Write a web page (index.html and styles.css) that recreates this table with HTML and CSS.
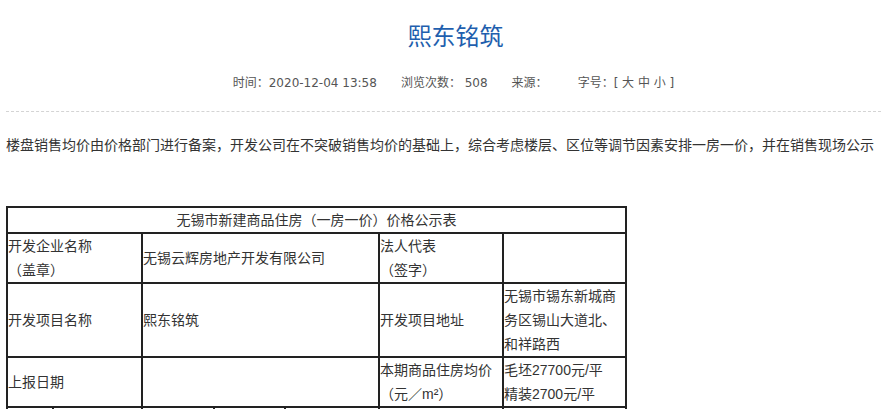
FILE: index.html
```html
<!DOCTYPE html>
<html lang="zh-CN">
<head>
<meta charset="utf-8">
<title>熙东铭筑</title>
<link rel="stylesheet" href="styles.css">
</head>
<body>
<div class="page">
  <h1 class="title">熙东铭筑</h1>
  <div class="meta">
    <span class="item">时间：2020-12-04 13:58</span>
    <span class="item">浏览次数： 508</span>
    <span class="item src">来源：</span>
    <span class="item">字号：[ 大 中 小 ]</span>
  </div>
  <p class="intro">楼盘销售均价由价格部门进行备案，开发公司在不突破销售均价的基础上，综合考虑楼层、区位等调节因素安排一房一价，并在销售现场公示</p>
  <table class="price">
    <colgroup>
      <col class="w1"><col class="w2"><col class="w3"><col class="w4"><col class="w5"><col class="w6"><col class="w7">
    </colgroup>
    <tr><td colspan="7" class="center">无锡市新建商品住房（一房一价）价格公示表</td></tr>
    <tr>
      <td colspan="2">开发企业名称<br>（盖章）</td>
      <td colspan="3">无锡云辉房地产开发有限公司</td>
      <td>法人代表<br>（签字）</td>
      <td></td>
    </tr>
    <tr>
      <td colspan="2">开发项目名称</td>
      <td colspan="3">熙东铭筑</td>
      <td>开发项目地址</td>
      <td>无锡市锡东新城商务区锡山大道北、和祥路西</td>
    </tr>
    <tr>
      <td colspan="2">上报日期</td>
      <td colspan="3"></td>
      <td>本期商品住房均价<br>（元／m²）</td>
      <td>毛坯27700元/平<br>精装2700元/平</td>
    </tr>
    <tr>
      <td>&nbsp;</td><td></td><td></td><td></td><td></td><td></td><td></td>
    </tr>
  </table>
</div>
</body>
</html>
```

FILE: styles.css
```css
html, body {
  margin: 0;
  padding: 0;
  background: #fff;
}
body {
  font-family: "Liberation Sans", "Noto Sans CJK SC", sans-serif;
  color: #333;
}
.page {
  width: 875px;
  padding: 0 2px 0 6px;
}
.title {
  margin: 20px 0 0;
  padding-left: 24px;
  text-align: center;
  font-size: 24px;
  line-height: 34px;
  font-weight: normal;
  color: #1f5fae;
}
.meta {
  margin-top: 19px;
  padding: 0 0 18px 20px;
  display: flex;
  justify-content: center;
  font-family: "DejaVu Sans", "Noto Sans CJK SC", sans-serif;
  font-size: 12px;
  line-height: 20px;
  color: #555;
  border-bottom: 1px dashed #d4d4d4;
}
.item {
  margin-right: 24px;
}
.item:last-child {
  margin-right: 0;
}
.src {
  margin-right: 30px;
}
.intro {
  margin: 21px 0 0;
  font-size: 14px;
  line-height: 24px;
}
.price {
  margin-top: 49px;
  width: 621px;
  table-layout: fixed;
  border-collapse: separate;
  border-spacing: 0;
  border: 1px solid #222;
  font-size: 14px;
  line-height: 24px;
  color: #333;
}
.price td {
  border: 1px solid #222;
  padding: 0;
  vertical-align: middle;
  text-align: left;
}
.price td.center {
  text-align: center;
}
.w1 { width: 46px; }
.w2 { width: 89px; }
.w3 { width: 72px; }
.w4 { width: 71px; }
.w5 { width: 94px; }
.w6 { width: 124px; }
.w7 { width: 123px; }
```
